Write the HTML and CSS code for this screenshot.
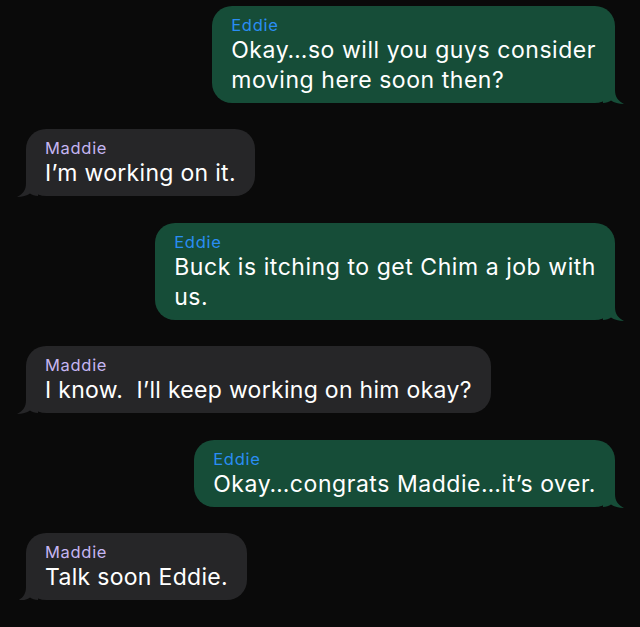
FILE: index.html
```html
<!DOCTYPE html>
<html lang="en">
<head>
  <meta charset="UTF-8" />
  <meta name="viewport" content="width=device-width, initial-scale=1.0"/>
  <title>Messages</title>
  <link rel="stylesheet" href="styles.css">
</head>
<body>

  <div class="thread">

    <div class="row out">
      <div class="bubble">
        <div class="name">Eddie</div>
        <div class="text">Okay…so will you guys consider<br>moving here soon then?</div>
        <svg class="tail" viewBox="0 0 22 24"><path d="M0 0 H12 V10 C12 17 15 21 21 24 C16 24 11 22.5 8 20.5 C6 22 3 23 0 23 Z"/></svg>
      </div>
    </div>

    <div class="row in">
      <div class="bubble">
        <div class="name">Maddie</div>
        <div class="text">I’m working on it.</div>
        <svg class="tail" viewBox="0 0 22 24"><path d="M22 0 H10 V10 C10 17 7 21 1 24 C6 24 11 22.5 14 20.5 C16 22 19 23 22 23 Z"/></svg>
      </div>
    </div>

    <div class="row out">
      <div class="bubble">
        <div class="name">Eddie</div>
        <div class="text">Buck is itching to get Chim a job with<br>us.</div>
        <svg class="tail" viewBox="0 0 22 24"><path d="M0 0 H12 V10 C12 17 15 21 21 24 C16 24 11 22.5 8 20.5 C6 22 3 23 0 23 Z"/></svg>
      </div>
    </div>

    <div class="row in">
      <div class="bubble">
        <div class="name">Maddie</div>
        <div class="text">I know.&nbsp; I’ll keep working on him okay?</div>
        <svg class="tail" viewBox="0 0 22 24"><path d="M22 0 H10 V10 C10 17 7 21 1 24 C6 24 11 22.5 14 20.5 C16 22 19 23 22 23 Z"/></svg>
      </div>
    </div>

    <div class="row out">
      <div class="bubble">
        <div class="name">Eddie</div>
        <div class="text">Okay…congrats Maddie…it’s over.</div>
        <svg class="tail" viewBox="0 0 22 24"><path d="M0 0 H12 V10 C12 17 15 21 21 24 C16 24 11 22.5 8 20.5 C6 22 3 23 0 23 Z"/></svg>
      </div>
    </div>

    <div class="row in">
      <div class="bubble">
        <div class="name">Maddie</div>
        <div class="text">Talk soon Eddie.</div>
        <svg class="tail" viewBox="0 0 22 24"><path d="M22 0 H10 V10 C10 17 7 21 1 24 C6 24 11 22.5 14 20.5 C16 22 19 23 22 23 Z"/></svg>
      </div>
    </div>

  </div>

</body>
</html>
```

FILE: styles.css
```css
body {
  font-family: Inter, 'Noto Sans', sans-serif;
  margin: 0;
  background-color: #0a0a0a;
  color: white;
}

.thread {
  display: flex;
  flex-direction: column;
  gap: 26.4px;
  padding: 6px 25px 0 26px;
}

.row {
  display: flex;
}

.row.out {
  justify-content: flex-end;
}

.bubble {
  position: relative;
  padding: 9px 19px 8px 19px;
  border-radius: 20px;
}

.out .bubble {
  background-color: #164d38;
}

.in .bubble {
  background-color: #262628;
}

.name {
  font-size: 16.5px;
  line-height: 20px;
  letter-spacing: 0.7px;
}

.out .name {
  color: #2a8df4;
}

.in .name {
  color: #c5b5f2;
}

.text {
  font-size: 23px;
  line-height: 30px;
  letter-spacing: 0.3px;
}

.out .text {
  letter-spacing: 0.55px;
}

.tail {
  position: absolute;
  bottom: -1px;
  width: 22px;
  height: 24px;
}

.out .tail {
  right: -10px;
  fill: #164d38;
}

.in .tail {
  left: -10px;
  fill: #262628;
}
```
